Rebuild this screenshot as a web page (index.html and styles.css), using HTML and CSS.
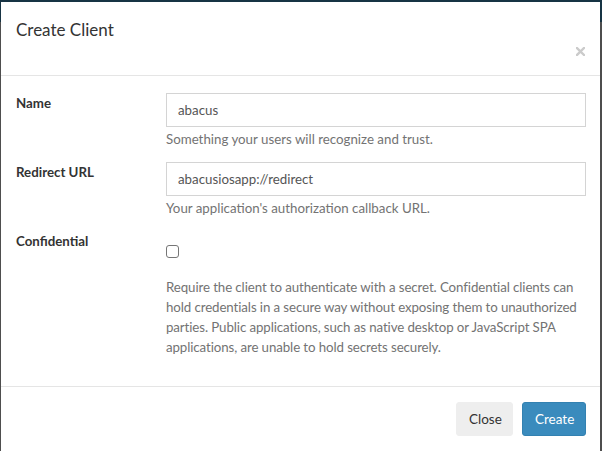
FILE: index.html
```html
<!DOCTYPE html>
<html>
<head>
<meta charset="utf-8">
<link rel="stylesheet" href="styles.css">
</head>
<body>
<div class="backdrop">
  <div class="page-header"></div>
  <div class="modal">
    <div class="modal-header">
      <h4 class="modal-title">Create Client</h4>
      <div class="close-row">
        <svg class="close" width="9" height="9" viewBox="0 0 9 9" aria-label="close"><path d="M1 1 L8 8 M8 1 L1 8" stroke="#cbcbcb" stroke-width="2.4" stroke-linecap="square"/></svg>
      </div>
    </div>
    <div class="modal-body">
      <div class="form-group">
        <label class="control-label">Name</label>
        <div class="control">
          <div class="input">abacus</div>
          <p class="help">Something your users will recognize and trust.</p>
        </div>
      </div>
      <div class="form-group">
        <label class="control-label">Redirect URL</label>
        <div class="control">
          <div class="input">abacusiosapp://redirect</div>
          <p class="help">Your application's authorization callback URL.</p>
        </div>
      </div>
      <div class="form-group">
        <label class="control-label">Confidential</label>
        <div class="control">
          <div class="checkbox"><span class="box"></span></div>
          <p class="help desc">Require the client to authenticate with a secret. Confidential clients can hold credentials in a secure way without exposing them to unauthorized parties. Public applications, such as native desktop or JavaScript SPA applications, are unable to hold secrets securely.</p>
        </div>
      </div>
    </div>
    <div class="modal-footer">
      <button class="btn btn-default">Close</button>
      <button class="btn btn-primary">Create</button>
    </div>
  </div>
</div>
</body>
</html>
```

FILE: styles.css
```css
* { box-sizing: border-box; }
html, body {
  margin: 0;
  padding: 0;
  height: 100%;
  overflow: hidden;
}
body {
  font-family: "Lato", "Liberation Sans", sans-serif;
  font-size: 13.3px;
  line-height: 20px;
  color: #333;
  background: #4e4e4e;
}
.backdrop {
  position: relative;
  height: 100%;
  background: #4e4e4e;
}
.page-header {
  position: absolute;
  top: 0;
  left: 0;
  right: 0;
  height: 22px;
  background: #173444;
}
.modal {
  position: absolute;
  top: 2px;
  left: 1px;
  width: 599px;
  bottom: -20px;
  background: #fff;
}
.modal-header {
  padding: 15px 15px 0 15px;
  height: 74px;
  border-bottom: 1px solid #e5e5e5;
}
.modal-title {
  margin: 0;
  font-size: 17px;
  font-weight: 400;
  line-height: 26px;
  color: #333;
}
.close-row {
  display: flex;
  justify-content: flex-end;
  padding-top: 4px;
}
.close {
  display: block;
}
.modal-body {
  padding: 17px 14px 16px 15px;
}
.form-group {
  display: grid;
  grid-template-columns: 150px 1fr;
  margin-bottom: 13px;
}
.control-label {
  font-weight: 700;
}
.input {
  height: 34px;
  border: 1px solid #d4d4d4;
  padding: 6px 11px;
  color: #555;
  line-height: 20px;
}
.help {
  margin: 2px 0 0 0;
  color: #737373;
}
.checkbox {
  padding-top: 14px;
  height: 27px;
}
.box {
  display: block;
  width: 13px;
  height: 13px;
  border: 1px solid #767676;
  border-radius: 3px;
  background: #fff;
}
.desc {
  margin-top: 19px;
  letter-spacing: -0.1px;
}
.modal-footer {
  border-top: 1px solid #e5e5e5;
  padding: 15px 14px 15px 15px;
  display: flex;
  justify-content: flex-end;
  gap: 9px;
}
.btn {
  font-family: inherit;
  font-size: 13.5px;
  line-height: 20px;
  height: 34px;
  padding: 6px 12px;
  border-radius: 3px;
  border: 1px solid transparent;
  cursor: pointer;
}
.btn-default {
  background: #eee;
  border-color: #eee;
  color: #333;
  width: 57px;
}
.btn-primary {
  background: #3a8bbd;
  border-color: #3381b1;
  color: #fff;
  width: 64px;
}
```
